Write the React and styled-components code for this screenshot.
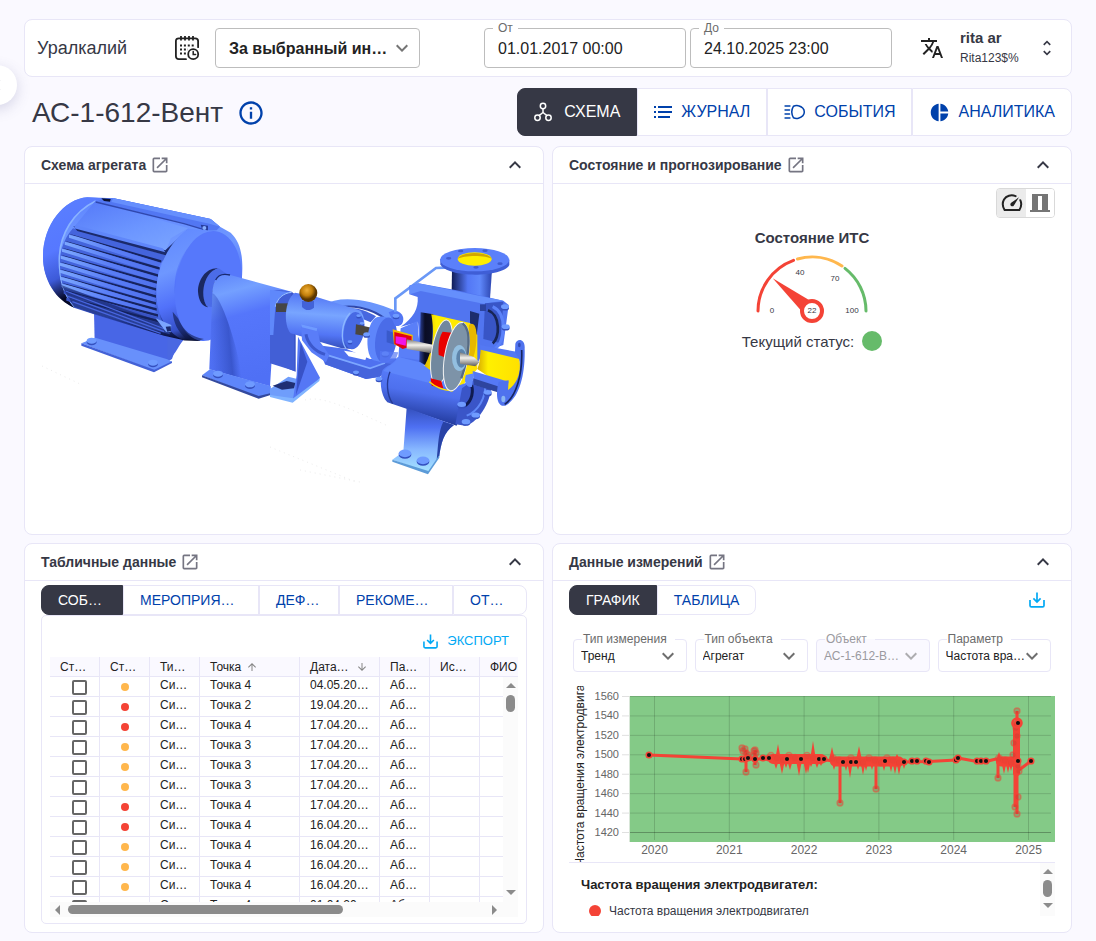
import React from "react";
import styled, { createGlobalStyle, css } from "styled-components";
import {
  MdTranslate,
  MdOpenInNew,
  MdExpandLess,
  MdUnfoldMore,
  MdKeyboardArrowDown,
  MdChevronLeft,
  MdInfoOutline,
  MdPieChart,
  MdArrowUpward,
  MdArrowDownward,
} from "react-icons/md";

const ink = "#363845";
const line = "#e8e6f7";
const page = "#faf9ff";
const blue = "#0041ab";
const cyan = "#03a9f4";
const red = "#f44336";
const orange = "#ffb74d";
const green = "#66bb6a";

const GlobalStyle = createGlobalStyle`
  *, *::before, *::after { box-sizing: border-box; }
  body {
    margin: 0;
    background: ${page};
    color: ${ink};
    font-family: "Liberation Sans", Arial, sans-serif;
    font-size: 14px;
  }
  button, input, select { font-family: inherit; margin: 0; }
  svg { display: block; flex: none; }
`;

const Page = styled.main`
  padding: 19px 24px 8px;
`;

const DrawerToggle = styled.button`
  position: fixed;
  left: -23px;
  top: 65px;
  width: 40px;
  height: 40px;
  padding: 0;
  border: 0;
  border-radius: 50%;
  background: #fff;
  color: #bdbbc9;
  box-shadow: 0 4px 14px rgba(80, 80, 140, 0.22);
  display: flex;
  align-items: center;
  justify-content: center;
`;

const TopBar = styled.header`
  display: flex;
  align-items: center;
  height: 58px;
  padding: 0 14px 0 12px;
  background: #fff;
  border: 1px solid ${line};
  border-radius: 8px;
`;

const Brand = styled.span`
  width: 137px;
  font-size: 18px;
`;

const IntervalBox = styled.div`
  position: relative;
  width: 205px;
  height: 40px;
  margin-left: 15px;
  > svg {
    position: absolute;
    right: 6px;
    top: 8px;
    color: #757575;
    pointer-events: none;
  }
`;

const IntervalSelect = styled.select`
  appearance: none;
  width: 100%;
  height: 100%;
  padding: 0 30px 0 13px;
  border: 1px solid #bdbdbd;
  border-radius: 4px;
  background: #fff;
  color: #222;
  font-size: 16px;
  font-weight: 700;
`;

const Dates = styled.div`
  display: flex;
  gap: 4px;
  margin-left: auto;
`;

const Field = styled.div`
  position: relative;
  flex: ${(p) => (p.$grow ? "1 1 0" : "none")};
  min-width: 0;
`;

const FieldLabel = styled.label`
  position: absolute;
  top: -7px;
  left: 9px;
  padding: 0 ${(p) => (p.$wide ? 8 : 5)}px 0 ${(p) => (p.$wide ? 1 : 5)}px;
  line-height: 14px;
  font-size: 12px;
  color: ${(p) => (p.$off ? "#9a9aa0" : "#6b6b6b")};
  background: ${(p) => (p.$off ? `linear-gradient(#fff 50%, ${page} 50%)` : "#fff")};
  white-space: nowrap;
`;

const DateInput = styled.input`
  display: block;
  width: 202px;
  height: 40px;
  padding: 2px 13px 0;
  border: 1px solid #bdbdbd;
  border-radius: 4px;
  background: #fff;
  color: #222;
  font-size: 16px;
`;

const IconButton = styled.button`
  padding: 0;
  border: 0;
  background: none;
  color: ${(p) => p.$color || ink};
  display: flex;
`;

const LangButton = styled(IconButton)`
  margin-left: 28px;
`;

const UserBlock = styled.div`
  width: 77px;
  margin-left: 16px;
`;

const UserName = styled.div`
  font-size: 15px;
  line-height: 20px;
  font-weight: 700;
`;

const UserLogin = styled.div`
  font-size: 12px;
  line-height: 20px;
`;

const TitleRow = styled.div`
  display: flex;
  align-items: center;
  gap: 14px;
  margin: 11px 0 10px;
  padding-left: 8px;
`;

const TitleGroup = styled.div`
  display: flex;
  align-items: center;
  gap: 14px;
  height: 48px;
  padding-top: 2px;
`;

const Title = styled.h1`
  margin: 0;
  font-size: 28px;
  line-height: 46px;
  font-weight: 400;
`;

const Nav = styled.nav`
  display: flex;
  height: 48px;
  margin-left: auto;
`;

const tabLook = css`
  display: flex;
  align-items: center;
  min-width: 0;
  padding: 0 16px;
  border: 1px solid ${(p) => (p.$active ? ink : line)};
  background: ${(p) => (p.$active ? ink : "#fff")};
  color: ${(p) => (p.$active ? "#fff" : blue)};
  white-space: nowrap;
  &:first-child { border-radius: 8px 0 0 8px; }
  &:last-child { border-radius: 0 8px 8px 0; }
`;

const NavButton = styled.button`
  ${tabLook}
  gap: 8px;
  font-size: 16px;
`;

const Tab = styled.button`
  ${tabLook}
  height: 30px;
  font-size: 14px;
`;

const Grid = styled.div`
  display: grid;
  grid-template-columns: minmax(0, 1fr) minmax(0, 1fr);
  gap: 8px;
`;

const Panel = styled.section`
  display: flex;
  flex-direction: column;
  min-width: 0;
  background: #fff;
  border: 1px solid ${line};
  border-radius: 8px;
`;

const PanelHead = styled.div`
  display: flex;
  align-items: center;
  height: 37px;
  padding: 0 16px;
  border-bottom: 1px solid ${line};
`;

const PanelTitle = styled.h2`
  margin: 0 4px 0 0;
  font-size: 14px;
  font-weight: 700;
`;

const CollapseSlot = styled.div`
  margin-left: auto;
`;

const PumpBody = styled.div`
  min-height: 350px;
  padding: 6px 13px 0 15px;
`;

const StateBody = styled.div`
  display: flex;
  flex-direction: column;
  align-items: center;
  padding: 4px 16px 0;
`;

const ViewSwitch = styled.div`
  display: flex;
  align-self: flex-end;
  border: 1px solid #d9d9d9;
  border-radius: 4px;
  overflow: hidden;
`;

const ViewButton = styled.button`
  display: flex;
  align-items: center;
  justify-content: center;
  width: 29px;
  height: 28px;
  padding: 0;
  border: 0;
  background: ${(p) => (p.$on ? "#ebebeb" : "#fff")};
  & + & { width: 28px; }
  & + &::before {
    content: "";
    width: 1px;
    height: 28px;
    margin-right: 4px;
    background: #cfcfcf;
  }
`;

const GaugeTitle = styled.h3`
  margin: 10px 0 4px;
  font-size: 15px;
  line-height: 20px;
  font-weight: 700;
`;

const StatusLine = styled.div`
  display: flex;
  align-items: center;
  gap: 8px;
  margin-top: 5px;
  font-size: 15px;
`;

const StatusDot = styled.span`
  display: block;
  width: ${(p) => p.$size}px;
  height: ${(p) => p.$size}px;
  border-radius: 50%;
  background: ${(p) => p.$color};
`;

const TabsBody = styled.div`
  padding: 4px 16px 8px;
`;

const DataTabs = styled.div`
  display: grid;
  grid-template-columns: 82fr 136fr 80fr 114fr 74fr;
`;

const TableCard = styled.div`
  padding: 8px 8px 6px;
  border: 1px solid ${line};
  border-radius: 5px;
`;

const ExportRow = styled.div`
  display: flex;
  justify-content: flex-end;
  padding: 9px 9px 8px;
`;

const ExportButton = styled.button`
  display: flex;
  align-items: center;
  gap: 9px;
  height: 16px;
  padding: 0 0 2px;
  border: 0;
  background: none;
  color: ${cyan};
  font-size: 13px;
  svg { position: relative; top: 1px; }
`;

const TableView = styled.div`
  position: relative;
  height: 245px;
  overflow: hidden;
`;

const Table = styled.table`
  width: 100%;
  table-layout: fixed;
  border-collapse: separate;
  border-spacing: 0;
  font-size: 12px;
  color: #222;
`;

const cell = css`
  height: 20px;
  padding: 0 0 0 10px;
  border-bottom: 1px solid ${line};
  border-right: 1px solid ${line};
  text-align: left;
  font-weight: 400;
  line-height: 18px;
  white-space: nowrap;
  overflow: hidden;
  &:last-child { border-right: 0; }
`;

const Th = styled.th`
  ${cell}
  background: ${page};
`;

const Td = styled.td`
  ${cell}
  line-height: 17px;
  vertical-align: top;
`;

const HeadCell = styled.span`
  display: flex;
  align-items: center;
  justify-content: ${(p) => (p.$spread ? "space-between" : "flex-start")};
  gap: 5px;
  padding-right: ${(p) => (p.$spread ? 11 : 0)}px;
  svg { color: #858585; }
`;

const Centered = styled.span`
  display: flex;
  align-items: center;
  justify-content: center;
  height: 19px;
  padding-top: 1px;
  padding-right: ${(p) => (p.$nudge ? 1 : 10)}px;
`;

const Check = styled.input`
  appearance: none;
  width: 15px;
  height: 15px;
  border: 2px solid #666;
  border-radius: 2px;
  background: #fff;
`;

const VBar = styled.div`
  display: flex;
  flex-direction: column;
  align-items: center;
  width: 15px;
  background: #fbfbfb;
`;

const TableVBar = styled(VBar)`
  position: absolute;
  top: 20px;
  right: 0;
  bottom: 0;
  justify-content: space-between;
  padding: 5px 0 6px;
`;

const HBar = styled.div`
  display: flex;
  align-items: center;
  justify-content: space-between;
  height: 15px;
  padding: 0 20px 0 4px;
  background: #fbfbfb;
`;

const BarGroup = styled.div`
  display: flex;
  flex-direction: ${(p) => (p.$row ? "row" : "column")};
  align-items: center;
  gap: ${(p) => p.$gap}px;
  flex: ${(p) => (p.$row ? 1 : "none")};
`;

const Thumb = styled.div`
  width: ${(p) => p.$w};
  height: ${(p) => p.$h};
  border-radius: 5px;
  background: #8b8b8b;
`;

const ChartTop = styled.div`
  display: flex;
  align-items: center;
  justify-content: space-between;
  padding-right: 10px;
`;

const ChartTabs = styled.div`
  display: flex;
`;

const Filters = styled.div`
  display: flex;
  gap: 8px;
  margin: 24px 4px 14px;
`;

const FilterSelect = styled.select`
  appearance: none;
  display: block;
  width: 100%;
  height: 33px;
  padding: 0 0 0 7px;
  border: 1px solid ${line};
  border-radius: 4px;
  background: ${(p) => (p.disabled ? page : "#fff")};
  color: ${(p) => (p.disabled ? "#9a9aa0" : "#222")};
  opacity: 1;
  font-size: 12px;
`;

const FilterArrow = styled.span`
  position: absolute;
  right: 7px;
  top: 5px;
  color: ${(p) => (p.$off ? "#adadb0" : "#6e6e6e")};
  pointer-events: none;
`;

const ChartSvg = styled.svg`
  width: 100%;
  height: auto;
  font-size: 12px;
  font-family: inherit;
`;

const Legend = styled.div`
  display: flex;
  justify-content: space-between;
  height: 54px;
  border-top: 1px solid ${line};
  overflow: hidden;
`;

const LegendText = styled.div`
  padding: 12px 12px 0;
`;

const LegendTitle = styled.div`
  margin-bottom: 8px;
  font-size: 13px;
  line-height: 20px;
  font-weight: 700;
  color: #222;
`;

const LegendItem = styled.div`
  display: flex;
  align-items: center;
  gap: 8px;
  padding-left: 8px;
  font-size: 12px;
  line-height: 16px;
`;

const LegendBar = styled(VBar)`
  gap: 5px;
  padding-top: 5px;
`;

function CalendarIcon() {
  return (
    <svg width="26" height="26" viewBox="0 0 26 26" fill="none" stroke="#222" strokeWidth="1.8" strokeLinecap="round">
      <path d="M12 24.2H4.8C3 24.2 1.900 23 1.900 21.200V6C1.900 4.300 3 3.300 4.800 3.300H21.200C23 3.300 24.100 4.300 24.100 6V12.200" />
      <path d="M7 1V5.500M11 1V5.500M15 1V5.500M19 1V5.500" strokeLinecap="butt" />
      <path d="M6 10.500H21M6 14.500H14M6 18.500H13" strokeWidth="2" strokeDasharray="2 1.900" strokeLinecap="butt" />
      <circle cx="19.200" cy="19.200" r="5" />
      <path d="M19.200 16.600V19.500H21.600" strokeWidth="1.500" />
    </svg>
  );
}

function SchemeIcon() {
  return (
    <svg width="22" height="22" viewBox="0 0 22 22" fill="none" stroke="#fff" strokeWidth="1.5">
      <circle cx="9" cy="5" r="2.7" />
      <circle cx="3.500" cy="16.800" r="2.7" />
      <circle cx="14.500" cy="16.800" r="2.7" />
      <path d="M9 7.800V11.500L5 14.600M9 11.500L13 14.600" />
    </svg>
  );
}

function JournalIcon() {
  return (
    <svg width="19" height="20" viewBox="0 0 19 20" fill={blue}>
      <path d="M0 4h2v2H0zM0 9h2v2H0zM0 14h2v2H0zM4 4h14v2H4zM4 9h14v2H4zM4 14h12v2H4z" />
    </svg>
  );
}

function EventsIcon() {
  return (
    <svg width="22" height="20" viewBox="0 0 22 20" fill="none" stroke={blue} strokeWidth="1.5" strokeLinecap="round">
      <path d="M1 4H6M1 8H5.600M1 12H5.600M1 16H6" strokeWidth="1.3" />
      <path d="M9.500 4.200C11 3.500 12.800 3.300 14.400 3.800C18 4.800 20.300 7.200 20.300 10C20.300 12.800 18 15.200 14.400 16.200C12.800 16.700 11 16.500 9.500 15.800C7.400 12.300 7.400 7.700 9.500 4.200Z" />
    </svg>
  );
}

function DownloadIcon({ size = 16 }) {
  return (
    <svg width={size} height={size} viewBox="0 0 16 16" fill="none" stroke="currentColor" strokeWidth="1.7">
      <path d="M1 8V13.400Q1 14.800 2.400 14.800H13.600Q15 14.800 15 13.400V8" />
      <path d="M8 0.500V9.600M4.400 6.400L8 10L11.600 6.400" />
    </svg>
  );
}

function GaugeIcon() {
  return (
    <svg width="22" height="20" viewBox="0 0 22 20" fill="none" stroke="#222" strokeWidth="2" strokeLinecap="round">
      <path d="M14.600 3.100C10 1.200 5.200 2.900 3 6.500C1.200 9.800 1.500 13.600 3.600 17H18.400C20.400 13.800 20.700 10.200 19.300 7.200" />
      <path d="M18 4.200L12.900 12.400C12.300 13.500 10.800 13.700 9.900 12.800C9 11.900 9.200 10.500 10.200 9.800Z" fill="#222" stroke="none" />
    </svg>
  );
}

function ColumnsIcon() {
  return (
    <svg width="20" height="20" viewBox="0 0 20 20" fill="#757575">
      <path d="M2 1H18V17H20V19H0V17H2ZM8 3V17H12V3Z" fillRule="evenodd" />
    </svg>
  );
}

function Arrow({ dir }) {
  const shapes = {
    up: "M0 6L5 1L10 6Z",
    down: "M0 1L5 6L10 1Z",
    left: "M6 0L1 5L6 10Z",
    right: "M1 0L6 5L1 10Z",
  };
  const tall = dir === "left" || dir === "right";
  return (
    <svg width={tall ? 7 : 10} height={tall ? 10 : 7} fill="#8b8b8b">
      <path d={shapes[dir]} />
    </svg>
  );
}

function PanelHeader({ title }) {
  return (
    <PanelHead>
      <PanelTitle>{title}</PanelTitle>
      <IconButton aria-label="Открыть" $color="#757582">
        <MdOpenInNew size={20} />
      </IconButton>
      <CollapseSlot>
        <IconButton aria-label="Свернуть">
          <MdExpandLess size={24} />
        </IconButton>
      </CollapseSlot>
    </PanelHead>
  );
}

const Bolt = ({ x, y, r = 10 }) => (
  <g>
    <ellipse cx={x} cy={y + 4} rx={r} ry={r * 0.65} fill="#3450bf" />
    <ellipse cx={x} cy={y} rx={r} ry={r * 0.6} fill="#6f9bff" />
  </g>
);

const finLeft = [135, 122, 114, 110, 108, 107, 109, 113, 119, 127];
const finRight = [412, 407, 402, 399, 397, 396, 396, 398, 402, 408];

function PumpDrawing() {
  return (
    <svg width="100%" viewBox="40 190 490 300" role="img" aria-label="Схема агрегата">
      <defs>
        <linearGradient id="motor" x1="0" y1="0" x2="0" y2="1">
          <stop offset="0" stopColor="#5d84ff" />
          <stop offset=".3" stopColor="#7098ff" />
          <stop offset=".6" stopColor="#5273fb" />
          <stop offset=".85" stopColor="#2942ae" />
          <stop offset="1" stopColor="#060a2a" />
        </linearGradient>
        <linearGradient id="ring" x1=".3" y1="0" x2=".5" y2="1">
          <stop offset="0" stopColor="#6189ff" />
          <stop offset=".35" stopColor="#6e97ff" />
          <stop offset=".65" stopColor="#5171fa" />
          <stop offset=".88" stopColor="#3550c8" />
          <stop offset="1" stopColor="#0b1236" />
        </linearGradient>
        <linearGradient id="cap" x1="0" y1="0" x2=".25" y2="1">
          <stop offset="0" stopColor="#5b80ff" />
          <stop offset=".5" stopColor="#5678ff" />
          <stop offset=".75" stopColor="#3d5ad8" />
          <stop offset=".95" stopColor="#050824" />
        </linearGradient>
        <linearGradient id="plate" x1="0" y1="0" x2=".8" y2="1">
          <stop offset="0" stopColor="#5478f8" />
          <stop offset=".6" stopColor="#6c96ff" />
          <stop offset="1" stopColor="#7aa4ff" />
        </linearGradient>
        <linearGradient id="ridge">
          <stop offset="0" stopColor="#7ca8ff" />
          <stop offset=".5" stopColor="#5a7ef6" />
          <stop offset="1" stopColor="#4f70ec" />
        </linearGradient>
        <linearGradient id="guard" x1="0" y1="0" x2=".2" y2="1">
          <stop offset="0" stopColor="#5d83fb" />
          <stop offset=".2" stopColor="#74a0ff" />
          <stop offset=".42" stopColor="#5576fb" />
          <stop offset="1" stopColor="#4f70f5" />
        </linearGradient>
        <linearGradient id="shade" x1="0" y1=".5" x2=".8" y2=".3">
          <stop offset="0" stopColor="#3350c4" stopOpacity=".1" />
          <stop offset=".7" stopColor="#2f4abb" stopOpacity=".7" />
          <stop offset="1" stopColor="#3350c4" stopOpacity="0" />
        </linearGradient>
        <linearGradient id="tube" x1=".1" y1="0" x2="0" y2="1">
          <stop offset="0" stopColor="#5376f5" />
          <stop offset=".35" stopColor="#78a5ff" />
          <stop offset=".7" stopColor="#5275f5" />
          <stop offset="1" stopColor="#2b43a8" />
        </linearGradient>
        <linearGradient id="volute" x1=".2" y1="0" x2="0" y2="1">
          <stop offset="0" stopColor="#5c83ff" />
          <stop offset=".45" stopColor="#4e70ee" />
          <stop offset=".8" stopColor="#2740a6" />
          <stop offset="1" stopColor="#080e35" />
        </linearGradient>
        <linearGradient id="neck">
          <stop offset="0" stopColor="#101c56" />
          <stop offset=".4" stopColor="#5377f5" />
          <stop offset=".7" stopColor="#5f88fb" />
          <stop offset="1" stopColor="#2c45b0" />
        </linearGradient>
        <linearGradient id="leg" x1="0" y1="0" x2="0" y2="1">
          <stop offset="0" stopColor="#3450bd" />
          <stop offset=".3" stopColor="#4e70f2" />
          <stop offset=".65" stopColor="#88b8ff" />
          <stop offset="1" stopColor="#a6e4ff" />
        </linearGradient>
        <linearGradient id="steel" x1="0" y1="0" x2="0" y2="1">
          <stop offset="0" stopColor="#777" />
          <stop offset=".4" stopColor="#f3f1ec" />
          <stop offset="1" stopColor="#5b5957" />
        </linearGradient>
        <linearGradient id="cavity">
          <stop offset="0" stopColor="#2c429c" />
          <stop offset=".4" stopColor="#0a0d25" />
          <stop offset="1" stopColor="#0d1230" />
        </linearGradient>
        <linearGradient id="gold">
          <stop offset="0" stopColor="#d8ab00" />
          <stop offset=".25" stopColor="#fff000" />
          <stop offset="1" stopColor="#ffe000" />
        </linearGradient>
        <radialGradient id="ball" cx=".42" cy=".35">
          <stop offset="0" stopColor="#eeb03a" />
          <stop offset=".6" stopColor="#c27e0a" />
          <stop offset="1" stopColor="#5c3700" />
        </radialGradient>
      </defs>

      <g fill="none" stroke="#ececec" strokeDasharray="1 4">
        <path d="M42 366L80 384M270 447L356 482M300 470L360 482" />
        <path d="M305 400C320 396 340 404 388 426" />
      </g>

      <g transform="translate(24 185) scale(.33333)">
        {/* motor foot */}
        <path d="M210 380L480 460L455 500L432 532L212 470Z" fill="#4866e6" />
        <path d="M430 452L482 462L455 490L444 522L430 530Z" fill="#4a68e2" />
        <path d="M172 475L214 458L430 523L444 530L392 557Z" fill="#6890fb" />
        <path d="M172 475V482L390 562L444 534V529L391 554Z" fill="#4361d6" />
        <Bolt x={203} y={467} r={15} />
        <Bolt x={387} y={533} r={15} />
        {/* motor shell */}
        <path d="M190 37L270 40L560 102L588 125L620 143C648 170 655 205 655 250C655 360 600 465 520 467L480 466L420 452L210 388L150 368C95 340 57 280 57 215C57 120 120 42 190 37Z" fill="url(#motor)" />
        <path d="M190 37L235 40C160 75 105 140 105 225C105 290 122 335 152 368C95 345 57 285 57 215C57 120 120 42 190 37Z" fill="url(#cap)" />
        <path d="M215 48C150 80 106 145 106 225C106 290 124 335 152 366" fill="none" stroke="#8ab4ff" strokeWidth="5" />
        <path d="M147 130L440 215L405 235L398 300L410 400L438 448L210 386L152 366C118 330 106 280 108 220C112 185 125 155 147 130Z" fill="#4464dc" />
        {finLeft.map((x, i) => {
          const y1 = 146 + i * 21;
          const y2 = 226 + i * 21 - (i > 6 ? (i - 6) * 3 : 0);
          const r = finRight[i];
          return (
            <g key={x}>
              <path d={`M${x} ${y1}L${r} ${y2}L${r} ${y2 + 7}L${x + 26} ${y1 + 11}Z`} fill="#16235e" />
              <path d={`M${x} ${y1 + 3}L${x + 26} ${y1 + 9}L${r} ${y2 + 9}L${r - 8} ${y2 + 20}L${x} ${y1 + 12}Z`} fill={i > 7 ? "#3953c4" : "url(#ridge)"} />
            </g>
          );
        })}
        <path d="M112 300L300 372L435 418L438 452L210 386L150 365Z" fill="#13205c" opacity=".55" />
        <path d="M125 318L300 385L430 435M132 334L300 396L420 440M145 350L300 406L410 445" fill="none" stroke="#4765de" strokeWidth="4" />
        <path d="M214 48L492 130L440 160L424 203L150 126Z" fill="url(#plate)" />
        <path d="M148 124L424 196L490 134L494 139L430 212L160 138Z" fill="#1b2a6b" />
        <path d="M154 120L416 190L424 202L150 130Z" fill="#5f86fa" />
        <path d="M240 40L270 40L560 102L588 125L578 136L545 137L480 114L215 50Z" fill="#5277f3" />
        <path d="M268 40L560 102L588 125L556 116L262 51Z" fill="#668ffd" />
        <path d="M215 51L480 116L540 134" fill="none" stroke="#3048ae" strokeWidth="4" />
        <path d="M232 40L260 42L258 50L240 48Z" fill="#0b1233" />
        <path d="M530 119L552 122V137L536 139Z" fill="#263b99" />
        <circle cx="541" cy="129" r="6" fill="#86aeff" />
        {/* front shield */}
        <path d="M492 131C430 175 395 260 397 325C398 380 420 440 480 466L530 467C470 420 450 350 452 300C455 225 500 150 566 139L545 135Z" fill="url(#ring)" />
        <ellipse cx="553" cy="303" rx="99" ry="166" transform="rotate(8 553 303)" fill="#5678fb" />
        <path d="M488 462C460 440 448 410 446 380L462 400C480 440 500 455 540 462L520 468Z" fill="#0f1a4c" opacity=".6" />
        <path d="M395 400L442 420L440 442L426 440Z" fill="#7ba5ff" />
        <path d="M425 425L440 424L441 438L430 440Z" fill="#1a2a70" />
        <path d="M582 250C545 248 522 285 522 320C524 348 535 364 552 367C536 340 534 270 582 250Z" fill="#1b2860" />
        <path d="M584 250C540 258 526 330 548 364L590 370L620 275Z" fill="#4b6ce8" />
        <path d="M572 291H590V320H566Z" fill="#5c563f" />
        {/* coupling guard */}
        <path d="M752 380C755 345 780 322 803 320L815 330V560L742 530Z" fill="#3853c9" />
        <path d="M565 330C566 285 580 268 608 267L803 320C770 326 754 345 752 380L738 604L556 553Z" fill="url(#guard)" />
        <path d="M565 325C590 330 640 480 655 580L556 553Z" fill="url(#shade)" />
        <path d="M575 285C583 268 598 265 618 270" fill="none" stroke="#1a2a70" strokeWidth="4" />
        <path d="M760 358H830V385H757Z" fill="#3e3e3e" />
        <path d="M534 571L558 553L740 603L742 628L704 638Z" fill="#5e86fa" />
        <path d="M534 571L704 633L742 624V629L704 641L534 577Z" fill="#33499e" />
        <Bolt x={582} y={566} r={15} />
        <Bolt x={678} y={598} r={15} />
      </g>

      <g transform="translate(270 235) scale(.33333)">
        <path d="M0 172C14 164 40 164 64 172L72 300L74 408L0 385Z" fill="#425fd6" />
        <path d="M0 165L65 172C40 174 22 190 16 215L10 300H0Z" fill="#5f88fb" />
        <path d="M16 215C22 190 40 174 65 172" fill="none" stroke="#9cc3ff" strokeWidth="3" />
        <rect x="18" y="205" width="36" height="26" fill="#454545" />
        {/* lower bracket arm */}
        <path d="M140 330L230 342L300 372L390 370L330 425L288 432L165 388Z" fill="#4f71f0" />
        <path d="M222 347L292 358L286 375L236 364Z" fill="#fff" />
        <path d="M168 362L300 400L380 372L330 425L288 432L165 388Z" fill="#4564dc" />
        <path d="M165 358L300 400L345 384" fill="none" stroke="#7ca6ff" strokeWidth="5" />
        <Bolt x={258} y={412} r={9} />
        {/* bearing pedestal */}
        <path d="M0 462L55 425L82 432L78 480L68 500L0 482Z" fill="#6f9dfb" />
        <path d="M8 452L50 438L76 444L72 460L36 464Z" fill="#202f74" />
        <path d="M84 305L150 428L142 440L68 500L80 420Z" fill="#5577f5" />
        <path d="M70 490L142 436L150 428L148 438L68 503L0 486V480Z" fill="#81b4ff" />
        <path d="M92 322L78 480L112 380Z" fill="#3852c7" />
        {/* upper arm */}
        <path d="M158 210C210 180 290 190 380 228L398 250L390 268L350 256C300 218 240 204 190 222Z" fill="#6b96fc" />
        <path d="M190 221C240 205 305 218 352 256" fill="none" stroke="#3048aa" strokeWidth="6" />
        <path d="M205 222C250 213 285 224 318 244L302 262Z" fill="#4767df" />
        {/* bearing housing */}
        <path d="M75 173L130 183L268 226C292 238 290 330 245 342L215 340L62 295C40 270 42 195 75 173Z" fill="url(#tube)" />
        <ellipse cx="252" cy="287" rx="30" ry="56" transform="rotate(8 252 287)" fill="#4769e4" />
        <path d="M240 234C214 262 210 315 228 341" fill="none" stroke="#8cb7ff" strokeWidth="4" />
        <Bolt x={266} y={242} r={7} />
        <Bolt x={276} y={265} r={7} />
        <Bolt x={240} y={320} r={7} />
        <path d="M93 268L142 280L150 320L178 360L168 382L124 352L96 316Z" fill="#5a7df8" />
        <path d="M93 268L142 280L140 288L96 277Z" fill="#6f9bff" />
        <path d="M108 298C112 325 135 350 165 358" fill="none" stroke="#3c58cc" strokeWidth="9" />
        <path d="M96 198H132V218C120 228 106 228 96 216Z" fill="#4262d8" />
        <circle cx="115" cy="174" r="27" fill="url(#ball)" />
        <path d="M258 268L304 278V306L256 298Z" fill="#4b463f" />
        {/* gland flange */}
        <path d="M312 252C330 238 360 246 370 262C384 294 378 350 345 384L310 376C286 362 286 280 312 252Z" fill="#5e86fb" />
        <ellipse cx="348" cy="315" rx="32" ry="68" transform="rotate(8 348 315)" fill="#4a6ce8" />
        <path d="M356 232C374 220 400 232 400 252C400 268 388 276 375 272Z" fill="#5376f3" />
        <path d="M350 286L384 298V332L350 322Z" fill="#395acb" />
        <Bolt x={378} y={242} r={10} />
        <Bolt x={290} y={298} r={10} />
        <Bolt x={346} y={356} r={11} />
        <path d="M330 348L385 352L372 388L330 382Z" fill="#5577f4" opacity=".7" />
        {/* flush line */}
        <path d="M376 232V190L498 99L525 98" fill="none" stroke="#6a98f6" strokeWidth="8" />
        {/* discharge neck */}
        <path d="M546 105H666L660 192L545 170Z" fill="url(#neck)" />
        <path d="M511 72V88C530 130 700 128 718 90V74Z" fill="#3f5ed6" />
        <ellipse cx="614" cy="74" rx="104" ry="35" fill="#5b80fa" />
        <ellipse cx="614" cy="72" rx="51" ry="20" fill="#ffee00" />
        <path d="M563 72C572 48 656 48 665 72C650 60 580 60 563 72Z" fill="#d2a600" />
        <g fill="#3f5cd0">
          <ellipse cx="536" cy="70" rx="8" ry="4" />
          <ellipse cx="572" cy="48" rx="8" ry="4" />
          <ellipse cx="645" cy="47" rx="8" ry="4" />
          <ellipse cx="690" cy="86" rx="8" ry="4" />
          <ellipse cx="618" cy="97" rx="8" ry="4" />
        </g>
        {/* casing */}
        <path d="M418 152L445 145L560 166L700 197L716 210L700 330L640 350L600 430L440 385L385 368C400 345 440 345 447 300L444 262L392 275C430 250 446 220 443 186L418 178Z" fill="#5175f0" />
        <path d="M392 280L443 258L450 375L385 366Z" fill="#5a7ff8" />
        <path d="M418 152L445 145L700 197L640 206L452 168L420 178Z" fill="#658ffc" />
        <path d="M645 205L700 200L692 325L640 312Z" fill="#3855c6" />
        <path d="M654 226C692 240 690 310 668 325" fill="none" stroke="#172555" strokeWidth="8" />
        <path d="M668 215C712 235 706 320 676 340" fill="none" stroke="#5b82fa" strokeWidth="9" />
        <path d="M630 208H648V228H630Z" fill="#2b439f" />
        <Bolt x={705} y={215} r={12} />
        <Bolt x={707} y={275} r={12} />
        <path d="M452 232L490 238L484 400L448 380Z" fill="url(#cavity)" />
        <path d="M484 238L600 264L622 300L622 402L560 470L458 404L472 375C492 330 492 285 484 238Z" fill="url(#gold)" />
        <path d="M600 228L628 236L620 300L600 262Z" fill="#1d2d6d" />
        <path d="M597 270C615 255 624 285 618 330C614 365 605 385 592 394Z" fill="#e6b800" />
        {/* shaft seal */}
        <path d="M368 283L428 300V324L400 340L372 328Z" fill="#f1bd00" />
        <path d="M373 291L425 304L424 334L398 342L373 326Z" fill="#e10014" />
        <path d="M377 304L409 308L407 332L377 325Z" fill="#f013e8" />
        <path d="M410 313L492 330V356L410 342Z" fill="url(#steel)" />
        {/* volute */}
        <path d="M338 405C350 390 370 390 384 365L450 385L555 455L598 440L560 572L352 502C330 480 328 430 338 405Z" fill="url(#volute)" />
        <path d="M384 366L450 382L548 462L340 408C360 388 374 388 384 366Z" fill="#5e86fb" />
        <path d="M360 410C348 440 350 480 368 506" fill="none" stroke="#253a94" strokeWidth="4" />
        <Bolt x={327} y={431} r={10} />
        <path d="M576 460L632 420L664 440C668 490 630 560 586 572L556 568Z" fill="#3a55c8" />
        <path d="M646 440C650 490 622 530 590 542" fill="none" stroke="#5f88f8" strokeWidth="6" />
        <path d="M605 450C612 480 600 505 580 515" fill="none" stroke="#101b50" strokeWidth="9" />
        {/* impeller */}
        <ellipse cx="515" cy="352" rx="30" ry="98" transform="rotate(9 515 352)" fill="#71889e" stroke="#f2f2f2" strokeWidth="3" />
        <path d="M518 290L552 294L540 340L528 368L506 360C504 330 508 305 518 290Z" fill="#e90000" />
        <path d="M482 430L514 438L520 460L485 452Z" fill="#e90000" />
        <path d="M478 440C500 460 520 464 548 468" fill="none" stroke="#ffe100" strokeWidth="4" />
        <ellipse cx="559" cy="365" rx="35" ry="104" transform="rotate(10 559 365)" fill="#7d93a8" stroke="#f4f4f4" strokeWidth="3" />
        <path d="M578 265C606 285 598 360 574 430" fill="none" stroke="#566b84" strokeWidth="7" />
        <ellipse cx="568" cy="369" rx="22" ry="39" fill="#93bfe0" />
        <ellipse cx="574" cy="370" rx="15" ry="28" fill="#5e84aa" />
        <path d="M570 352L612 366L628 382L616 394L570 386Z" fill="url(#steel)" />
        {/* suction port */}
        <path d="M630 330L748 352L755 378L632 350Z" fill="#5478f3" />
        <path d="M632 344L748 372C756 420 742 452 716 466L622 402L628 384Z" fill="url(#gold)" />
        <path d="M608 408L716 440L700 474L612 450Z" fill="#5579f5" />
        <path d="M609 430L702 460L698 476L612 450Z" fill="#2e459f" />
        <path d="M736 326C742 308 766 312 764 340C766 420 748 490 706 512C680 518 676 478 686 440L716 436L714 465C744 444 754 410 748 372L735 352Z" fill="#4f72ee" />
        <path d="M755 345C758 420 738 485 704 508" fill="none" stroke="#17255e" strokeWidth="5" />
        <ellipse cx="748" cy="330" rx="4" ry="7" fill="#3049b4" />
        <ellipse cx="700" cy="492" rx="6" ry="10" fill="#8bb7f2" />
        <path d="M588 420C580 440 590 460 606 455L612 415Z" fill="#6189fa" />
        <Bolt x={575} y={508} r={13} />
        <Bolt x={617} y={540} r={13} />
        <Bolt x={588} y={560} r={13} />
        <Bolt x={653} y={472} r={12} />
        {/* casing foot */}
        <path d="M410 518L552 570C520 592 514 625 508 662L475 712L367 674L400 650Z" fill="url(#leg)" />
        <path d="M552 570C520 592 514 625 508 662L500 675C505 625 505 590 520 560Z" fill="#2842a5" />
        <path d="M367 674L475 708L508 660V668L474 718L367 680Z" fill="#5c9bd8" />
        <Bolt x={405} y={655} r={19} />
        <Bolt x={459} y={676} r={19} />
      </g>
    </svg>
  );
}

function Gauge() {
  return (
    <svg width="120" height="74" viewBox="752 252 120 74" fontSize="8" textAnchor="middle" fill={ink}>
      <g fill="none" strokeWidth="3" strokeLinecap="round">
        <path d="M758 311A54 54 0 0 1 793.500 260.300" stroke={red} />
        <path d="M797.500 259A54 54 0 0 1 842 266" stroke={orange} />
        <path d="M845 268.400A54 54 0 0 1 866 311" stroke={green} />
      </g>
      <path d="M772.700 278.300L809 300L801 310.500Z" fill={red} />
      <circle cx="812" cy="311" r="10" fill="#fff" stroke={red} strokeWidth="4" />
      <text x="772" y="313">0</text>
      <text x="800" y="275">40</text>
      <text x="835" y="281">70</text>
      <text x="852" y="313">100</text>
      <text x="812" y="313">22</text>
    </svg>
  );
}

const yTicks = [1560, 1540, 1520, 1500, 1480, 1460, 1440, 1420];
const years = [2020, 2021, 2022, 2023, 2024, 2025];

// Dense stretches of the series: [start, end, centre]
const bands = [
  [768, 826, 759],
  [830, 904, 761.5],
  [996, 1019, 761.5],
];
const spikes = [
  [778, 744], [782, 774], [776, 769], [790, 770], [799, 776], [806, 774], [808, 773], [813, 741], [811, 767],
  [832, 747], [834, 770], [850, 778], [859, 746], [863, 775], [866, 771], [872, 770], [884, 771], [891, 772], [897, 754],
  [895, 774], [899, 775], [904, 769], [817, 768], [821, 766], [786, 768], [846, 771], [858, 770], [1004, 774], [1008, 773], [999, 752], [1011, 771],
];
const rings = [
  [742, 748], [743, 751], [745, 749], [746, 753], [754, 751], [755, 750], [756, 753], [746, 772], [756, 765], [748, 755], [754, 755],
  [840, 803], [876, 789], [998, 778], [1017, 711], [1014, 743], [1017, 736], [1015, 807], [1017, 814], [1018, 797],
  [1016, 728], [1013, 755], [1019, 771], [1015, 724], [1018, 766],
];
const dots = [
  [649, 755], [742, 759], [745, 759], [748, 758], [755, 759], [763, 758], [769, 758], [787, 759], [801, 759], [819, 759],
  [824, 759], [843, 762], [851, 762], [856, 762], [885, 761], [904, 762], [912, 761], [917, 761], [926, 761],
  [929, 762], [956, 760], [958, 758], [977, 761], [981, 761], [986, 761], [1018, 723], [1018, 761], [1031, 761],
];

function Chart() {
  return (
    <ChartSvg viewBox="569 686 486 176" role="img" aria-label="Частота вращения электродвигателя">
      <rect x="629" y="696" width="426" height="146" fill="#84ca87" />
      {yTicks.map((v, i) => {
        const y = 696.5 + i * 19.43;
        return (
          <g key={v}>
            <path d={`M622 ${y}H629`} stroke="#e0e0e0" />
            <path d={`M629 ${y}H1051`} stroke="#000" strokeOpacity={v === 1420 ? 0.28 : 0.14} />
            <text x="619" y={y + 3.5} textAnchor="end" fontSize="11" fill="#666">{v}</text>
          </g>
        );
      })}
      <path d="M629.500 696V842" stroke="#d8e6d8" />
      {years.map((v, i) => {
        const x = 654.5 + i * 74.8;
        return (
          <g key={v}>
            <path d={`M${x} 696V840`} stroke="#000" strokeOpacity=".15" />
            <text x={x} y="854" textAnchor="middle" fill="#666">{v}</text>
          </g>
        );
      })}
      <text transform="translate(584 866) rotate(-90)" fill="#222">Частота вращения электродвигател</text>

      <g fill="none" stroke={red} strokeWidth="3" strokeLinejoin="round">
        <path d="M649 755L742 759H769L826 760L840 762L904 762L929 761.500L956 760L958 758L977 761.500H986L996 759L1018 762" />
        <path d="M1019 770L1031 761" />
        <path d="M746 750V772M755 750V765M840 760V803M876 760V789M998 760V778" />
        <path d="M1017 711V814" />
        <path d="M1015 724V807" />
      </g>
      <rect x="1013" y="722" width="7" height="54" rx="3" fill={red} />
      <g fill={red}>
        {bands.map(([a, b, c]) => (
          <rect key={a} x={a} y={c - 5} width={b - a} height="10" rx="5" />
        ))}
        {spikes.map(([x, y]) => (
          <path key={`${x}-${y}`} d={`M${x - 3} 760L${x} ${y}L${x + 3} 760Z`} />
        ))}
      </g>
      <g fill="#b5382f" fillOpacity=".3" stroke={red} strokeOpacity=".5" strokeWidth="1.3">
        {rings.map(([x, y]) => (
          <circle key={`${x}-${y}`} cx={x} cy={y} r="3" />
        ))}
        {bands.map(([a, b, c]) =>
          Array.from({ length: Math.floor((b - a) / 6) }, (_, i) => (
            <circle key={`${a}-${i}`} cx={a + 3 + i * 6} cy={c + (i % 3) * 2 - 3} r="3.5" fillOpacity=".12" />
          ))
        )}
      </g>
      <g fill="#111" stroke={red} strokeWidth="1.5">
        {dots.map(([x, y]) => (
          <circle key={`${x}-${y}`} cx={x} cy={y} r="2.8" />
        ))}
      </g>
      <circle cx="1017" cy="723" r="4.5" fill="none" stroke={red} strokeWidth="2.5" />
    </ChartSvg>
  );
}

const columns = [
  { title: "Ст…", width: 50 },
  { title: "Ст…", width: 50 },
  { title: "Ти…", width: 50 },
  { title: "Точка", width: 100, sort: "up" },
  { title: "Дата…", width: 80, sort: "down" },
  { title: "Па…", width: 50 },
  { title: "Ис…", width: 50 },
  { title: "ФИО" },
];

const rows = [
  [orange, "Точка 4", "04.05.20…"],
  [red, "Точка 2", "19.04.20…"],
  [red, "Точка 4", "17.04.20…"],
  [orange, "Точка 3", "17.04.20…"],
  [orange, "Точка 3", "17.04.20…"],
  [orange, "Точка 3", "17.04.20…"],
  [red, "Точка 4", "17.04.20…"],
  [red, "Точка 4", "16.04.20…"],
  [orange, "Точка 4", "16.04.20…"],
  [orange, "Точка 4", "16.04.20…"],
  [orange, "Точка 4", "16.04.20…"],
  [orange, "Точка 4", "01.04.20…"],
];

const filters = [
  { id: "kind", label: "Тип измерения", value: "Тренд" },
  { id: "objType", label: "Тип объекта", value: "Агрегат" },
  { id: "obj", label: "Объект", value: "АС-1-612-В…", off: true },
  { id: "param", label: "Параметр", value: "Частота вра…" },
];

function EventsTable() {
  return (
    <TableCard>
      <ExportRow>
        <ExportButton>
          <DownloadIcon size={15} />
          ЭКСПОРТ
        </ExportButton>
      </ExportRow>
      <TableView>
        <Table>
          <colgroup>
            {columns.map((c, i) => (
              <col key={i} width={c.width} />
            ))}
          </colgroup>
          <thead>
            <tr>
              {columns.map((c, i) => (
                <Th key={i}>
                  <HeadCell $spread={c.sort === "down"}>
                    {c.title}
                    {c.sort === "up" && <MdArrowUpward size={12} />}
                    {c.sort === "down" && <MdArrowDownward size={12} />}
                  </HeadCell>
                </Th>
              ))}
            </tr>
          </thead>
          <tbody>
            {rows.map(([color, point, date], i) => (
              <tr key={i}>
                <Td>
                  <Centered $nudge>
                    <Check type="checkbox" aria-label={`Строка ${i + 1}`} />
                  </Centered>
                </Td>
                <Td>
                  <Centered>
                    <StatusDot $size={8} $color={color} />
                  </Centered>
                </Td>
                <Td>Си…</Td>
                <Td>{point}</Td>
                <Td>{date}</Td>
                <Td>Аб…</Td>
                <Td />
                <Td />
              </tr>
            ))}
          </tbody>
        </Table>
        <TableVBar>
          <BarGroup $gap={6}>
            <Arrow dir="up" />
            <Thumb $w="9px" $h="17px" />
          </BarGroup>
          <Arrow dir="down" />
        </TableVBar>
      </TableView>
      <HBar>
        <BarGroup $row $gap={7}>
          <Arrow dir="left" />
          <Thumb $w="63%" $h="9px" />
        </BarGroup>
        <Arrow dir="right" />
      </HBar>
    </TableCard>
  );
}

export default function App() {
  return (
    <>
      <GlobalStyle />
      <Page>
        <TopBar>
          <Brand>Уралкалий</Brand>
          <CalendarIcon />
          <IntervalBox>
            <IntervalSelect aria-label="Интервал">
              <option>За выбранный ин…</option>
            </IntervalSelect>
            <MdKeyboardArrowDown size={24} />
          </IntervalBox>
          <Dates>
            <Field>
              <DateInput id="from" defaultValue="01.01.2017 00:00" />
              <FieldLabel htmlFor="from">От</FieldLabel>
            </Field>
            <Field>
              <DateInput id="to" defaultValue="24.10.2025 23:00" />
              <FieldLabel htmlFor="to">До</FieldLabel>
            </Field>
          </Dates>
          <LangButton aria-label="Язык" $color="#222">
            <MdTranslate size={24} />
          </LangButton>
          <UserBlock>
            <UserName>rita ar</UserName>
            <UserLogin>Rita123$%</UserLogin>
          </UserBlock>
          <IconButton aria-label="Профиль">
            <MdUnfoldMore size={20} />
          </IconButton>
        </TopBar>

        <TitleRow>
          <TitleGroup>
            <Title>АС-1-612-Вент</Title>
            <IconButton aria-label="Информация" $color={blue}>
              <MdInfoOutline size={28} />
            </IconButton>
          </TitleGroup>
          <Nav>
            <NavButton $active>
              <SchemeIcon />
              СХЕМА
            </NavButton>
            <NavButton>
              <JournalIcon />
              ЖУРНАЛ
            </NavButton>
            <NavButton>
              <EventsIcon />
              СОБЫТИЯ
            </NavButton>
            <NavButton>
              <MdPieChart size={21} />
              АНАЛИТИКА
            </NavButton>
          </Nav>
        </TitleRow>

        <Grid>
          <Panel>
            <PanelHeader title="Схема агрегата" />
            <PumpBody>
              <PumpDrawing />
            </PumpBody>
          </Panel>

          <Panel>
            <PanelHeader title="Состояние и прогнозирование" />
            <StateBody>
              <ViewSwitch>
                <ViewButton $on aria-label="Шкала">
                  <GaugeIcon />
                </ViewButton>
                <ViewButton aria-label="Столбцы">
                  <ColumnsIcon />
                </ViewButton>
              </ViewSwitch>
              <GaugeTitle>Состояние ИТС</GaugeTitle>
              <Gauge />
              <StatusLine>
                Текущий статус:
                <StatusDot $size={20} $color={green} />
              </StatusLine>
            </StateBody>
          </Panel>

          <Panel>
            <PanelHeader title="Табличные данные" />
            <TabsBody>
              <DataTabs>
                <Tab $active>СОБ…</Tab>
                <Tab>МЕРОПРИЯ…</Tab>
                <Tab>ДЕФ…</Tab>
                <Tab>РЕКОМЕ…</Tab>
                <Tab>ОТ…</Tab>
              </DataTabs>
              <EventsTable />
            </TabsBody>
          </Panel>

          <Panel>
            <PanelHeader title="Данные измерений" />
            <TabsBody>
              <ChartTop>
                <ChartTabs>
                  <Tab $active>ГРАФИК</Tab>
                  <Tab>ТАБЛИЦА</Tab>
                </ChartTabs>
                <IconButton aria-label="Скачать" $color={cyan}>
                  <DownloadIcon />
                </IconButton>
              </ChartTop>
              <Filters>
                {filters.map((f) => (
                  <Field key={f.id} $grow>
                    <FilterSelect id={f.id} disabled={f.off}>
                      <option>{f.value}</option>
                    </FilterSelect>
                    <FieldLabel htmlFor={f.id} $wide $off={f.off}>
                      {f.label}
                    </FieldLabel>
                    <FilterArrow $off={f.off}>
                      <MdKeyboardArrowDown size={24} />
                    </FilterArrow>
                  </Field>
                ))}
              </Filters>
              <Chart />
              <Legend>
                <LegendText>
                  <LegendTitle>Частота вращения электродвигател:</LegendTitle>
                  <LegendItem>
                    <StatusDot $size={12} $color={red} />
                    Частота вращения электродвигател
                  </LegendItem>
                </LegendText>
                <LegendBar>
                  <Arrow dir="up" />
                  <Thumb $w="9px" $h="17px" />
                  <Arrow dir="down" />
                </LegendBar>
              </Legend>
            </TabsBody>
          </Panel>
        </Grid>
      </Page>
      <DrawerToggle aria-label="Меню">
        <MdChevronLeft size={24} />
      </DrawerToggle>
    </>
  );
}
